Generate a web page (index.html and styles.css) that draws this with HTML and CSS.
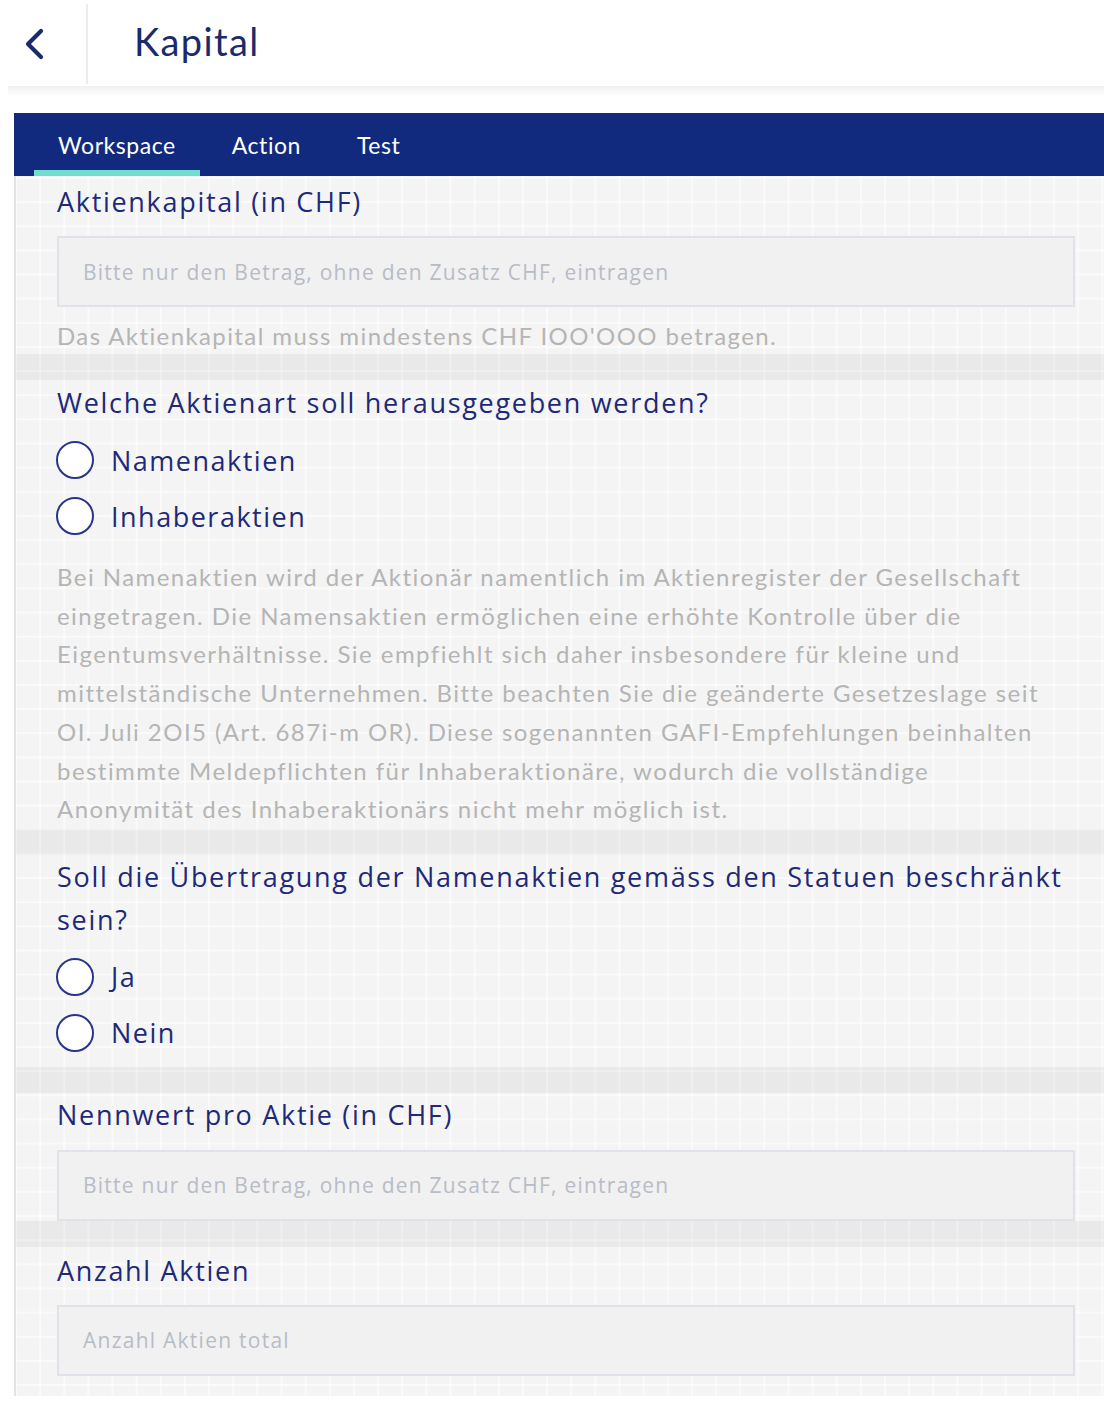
FILE: index.html
```html
<!DOCTYPE html>
<html lang="de">
<head>
<meta charset="utf-8">
<title>Kapital</title>
<link rel="stylesheet" href="styles.css">
</head>
<body>
<header class="header">
  <div class="back">
    <svg width="24" height="34" viewBox="0 0 24 34" class="chev"><polyline points="19,4 6,17 19,30" fill="none" stroke="#1b2a6b" stroke-width="4.2" stroke-linecap="round" stroke-linejoin="round"/></svg>
  </div>
  <h1 class="title">Kapital</h1>
</header>
<div class="header-shadow"></div>

<nav class="tabs">
  <div class="tab active">Workspace</div>
  <div class="tab">Action</div>
  <div class="tab">Test</div>
</nav>

<main class="content">
  <section class="sec first">
    <div class="label">Aktienkapital (in CHF)</div>
    <div class="input">Bitte nur den Betrag, ohne den Zusatz CHF, eintragen</div>
    <p class="help">Das Aktienkapital muss mindestens CHF IOO'OOO betragen.</p>
  </section>
  <div class="sep"></div>
  <section class="sec">
    <div class="label">Welche Aktienart soll herausgegeben werden?</div>
    <div class="radios">
      <div class="radio"><span class="circle"></span><span class="rlabel">Namenaktien</span></div>
      <div class="radio"><span class="circle"></span><span class="rlabel">Inhaberaktien</span></div>
    </div>
    <p class="para">Bei Namenaktien wird der Aktionär namentlich im Aktienregister der Gesellschaft eingetragen. Die Namensaktien ermöglichen eine erhöhte Kontrolle über die Eigentumsverhältnisse. Sie empfiehlt sich daher insbesondere für kleine und mittelständische Unternehmen. Bitte beachten Sie die geänderte Gesetzeslage seit OI. Juli 2OI5 (Art. 687i-m OR). Diese sogenannten GAFI-Empfehlungen beinhalten bestimmte Meldepflichten für Inhaberaktionäre, wodurch die vollständige Anonymität des Inhaberaktionärs nicht mehr möglich ist.</p>
  </section>
  <div class="sep"></div>
  <section class="sec s3">
    <div class="label wide">Soll die Übertragung der Namenaktien gemäss den Statuen beschränkt sein?</div>
    <div class="radios">
      <div class="radio"><span class="circle"></span><span class="rlabel">Ja</span></div>
      <div class="radio"><span class="circle"></span><span class="rlabel">Nein</span></div>
    </div>
  </section>
  <div class="sep"></div>
  <section class="sec s4">
    <div class="label">Nennwert pro Aktie (in CHF)</div>
    <div class="input">Bitte nur den Betrag, ohne den Zusatz CHF, eintragen</div>
  </section>
  <div class="sep"></div>
  <section class="sec s5">
    <div class="label">Anzahl Aktien</div>
    <div class="input">Anzahl Aktien total</div>
  </section>
</main>
</body>
</html>
```

FILE: styles.css
```css
html, body {
  margin: 0;
  padding: 0;
  background: #ffffff;
}
body {
  width: 1104px;
  overflow: hidden;
  font-family: "Open Sans", "Liberation Sans", sans-serif;
}

.header {
  display: flex;
  align-items: center;
  height: 86px;
  margin: 0 0 0 8px;
}
.back {
  width: 80px;
  height: 80px;
  margin-top: 2px;
  border-right: 2px solid #ececec;
  display: flex;
  align-items: center;
  padding-left: 14px;
  box-sizing: border-box;
}
.chev { display: block; }
.title {
  margin: -4px 0 0 46px;
  font-family: "Lato", sans-serif;
  font-weight: 400;
  font-size: 38px;
  color: #1b2a6b;
  letter-spacing: 1.4px;
}
.header-shadow {
  margin-left: 8px;
  height: 9px;
  background: linear-gradient(#f1f1f1, #fdfdfd);
}

.tabs {
  margin: 18px 0 0 14px;
  height: 63px;
  background: #122a7e;
  display: flex;
  gap: 8px;
  padding-left: 20px;
}
.tab {
  padding: 6px 24px 0;
  display: flex;
  align-items: center;
  color: #ffffff;
  font-family: "Lato", sans-serif;
  font-size: 23px;
  letter-spacing: 0.55px;
  box-sizing: border-box;
  border-bottom: 6px solid transparent;
}
.tab.active { border-bottom-color: #72dccf; }

.content {
  margin-left: 14px;
  border-left: 2px solid #e4e4e4;
  background-color: #f4f4f4;
  background-image:
    linear-gradient(90deg, rgba(255,255,255,0.55) 2px, transparent 2px),
    linear-gradient(rgba(255,255,255,0.55) 2px, transparent 2px);
  background-size: 24.15px 24.15px;
  background-position: -1px 1px;
}
.sec {
  padding: 1px 29px 0 41px;
}
.sec.first { padding-top: 4px; padding-bottom: 3px; }
.sec.s3 { padding-top: 0; padding-bottom: 6px; }
.sec.s4 { padding-top: 0; }
.sec.s4 .input { margin-top: 14px; }
.sec.s5 { padding-top: 2px; padding-bottom: 20px; }
.sep {
  height: 26px;
  background: rgba(0,0,0,0.045);
}

.label {
  font-size: 27px;
  line-height: 43px;
  color: #1e2a78;
  letter-spacing: 1.7px;
}
.label.wide {
  margin-right: -29px;
}
.input {
  margin-top: 13px;
  height: 71px;
  box-sizing: border-box;
  border: 2px solid #dfe2e9;
  background: #f1f1f1;
  display: flex;
  align-items: center;
  padding-left: 24px;
  font-size: 21px;
  color: #b8bcc6;
  letter-spacing: 1.25px;
}
.help {
  margin: 14px 0 0;
  font-family: "Lato", sans-serif;
  font-size: 24px;
  line-height: 30px;
  color: #b5b5b5;
  letter-spacing: 1.4px;
}
.radios {
  margin-top: 8px;
}
.radio {
  height: 56px;
  display: flex;
  align-items: center;
}
.circle {
  width: 38px;
  height: 38px;
  box-sizing: border-box;
  border: 2px solid #27368a;
  border-radius: 50%;
  background: #ffffff;
  margin-left: -1px;
  flex: none;
}
.rlabel {
  margin-left: 17px;
  font-size: 27px;
  color: #1e2a78;
  letter-spacing: 1.5px;
}
.para {
  margin: 14px 0 0;
  padding-right: 22px;
  font-family: "Lato", sans-serif;
  font-size: 24px;
  line-height: 38.7px;
  color: #b5b5b5;
  letter-spacing: 1.45px;
}
```
